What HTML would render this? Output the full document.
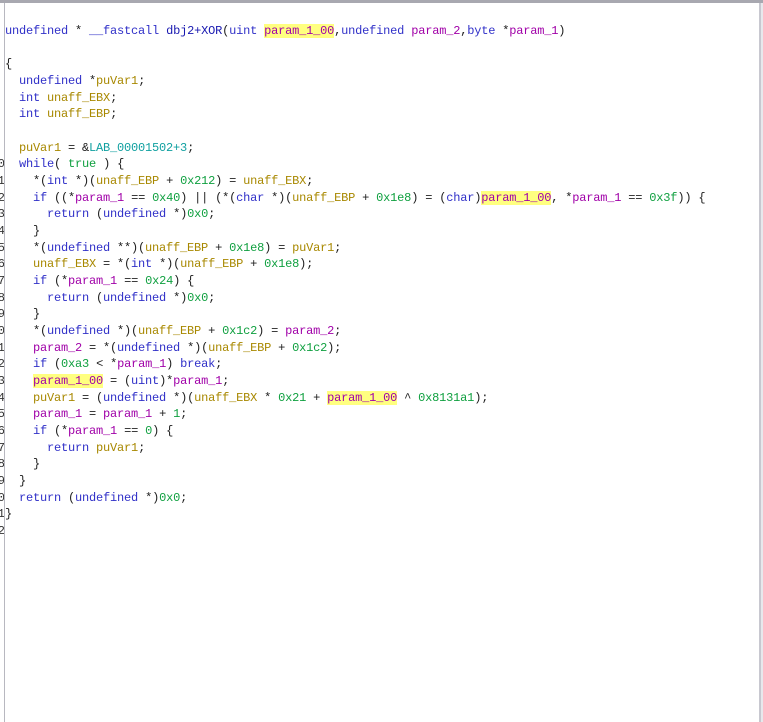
<!DOCTYPE html>
<html><head><style>
html,body{margin:0;padding:0;background:#fff;width:763px;height:722px;overflow:hidden;position:relative}
.top{position:absolute;left:0;top:0;width:763px;height:3px;background:#a8a8b0}
.lb{position:absolute;left:4px;top:3px;width:1px;height:719px;background:#b8b8c0}
.rb{position:absolute;left:759px;top:3px;width:2px;height:719px;background:#c8c8d0}
.rb2{position:absolute;left:761px;top:3px;width:2px;height:719px;background:#e8e8ec}
.code{position:absolute;left:5px;top:23px;font-family:"Liberation Mono",monospace;font-size:12px;letter-spacing:-0.2px;line-height:16.67px;white-space:pre;color:#202020}
.ln{position:absolute;right:758px;top:23px;font-family:"Liberation Mono",monospace;font-size:12px;line-height:16.67px;white-space:pre;color:#333;text-align:right}
.k{color:#3030c8}.p{color:#a000a8}.v{color:#a88800}.n{color:#10a040}.l{color:#10a0a0}.f{color:#1818b0}
.h{background:#ffff80}
</style></head><body>
<div class="top"></div>
<div class="ln">







10
11
12
13
14
15
16
17
18
19
20
21
22
23
24
25
26
27
28
29
30
31
32</div>
<div class="lb"></div>
<div class="code"><span class="k">undefined</span> * <span class="k">__fastcall</span> <span class="f">dbj2+XOR</span>(<span class="k">uint</span> <span class="p h">param_1_00</span>,<span class="k">undefined</span> <span class="p">param_2</span>,<span class="k">byte</span> *<span class="p">param_1</span>)

{
  <span class="k">undefined</span> *<span class="v">puVar1</span>;
  <span class="k">int</span> <span class="v">unaff_EBX</span>;
  <span class="k">int</span> <span class="v">unaff_EBP</span>;

  <span class="v">puVar1</span> = &amp;<span class="l">LAB_00001502+3</span>;
  <span class="k">while</span>( <span class="n">true</span> ) {
    *(<span class="k">int</span> *)(<span class="v">unaff_EBP</span> + <span class="n">0x212</span>) = <span class="v">unaff_EBX</span>;
    <span class="k">if</span> ((*<span class="p">param_1</span> == <span class="n">0x40</span>) || (*(<span class="k">char</span> *)(<span class="v">unaff_EBP</span> + <span class="n">0x1e8</span>) = (<span class="k">char</span>)<span class="p h">param_1_00</span>, *<span class="p">param_1</span> == <span class="n">0x3f</span>)) {
      <span class="k">return</span> (<span class="k">undefined</span> *)<span class="n">0x0</span>;
    }
    *(<span class="k">undefined</span> **)(<span class="v">unaff_EBP</span> + <span class="n">0x1e8</span>) = <span class="v">puVar1</span>;
    <span class="v">unaff_EBX</span> = *(<span class="k">int</span> *)(<span class="v">unaff_EBP</span> + <span class="n">0x1e8</span>);
    <span class="k">if</span> (*<span class="p">param_1</span> == <span class="n">0x24</span>) {
      <span class="k">return</span> (<span class="k">undefined</span> *)<span class="n">0x0</span>;
    }
    *(<span class="k">undefined</span> *)(<span class="v">unaff_EBP</span> + <span class="n">0x1c2</span>) = <span class="p">param_2</span>;
    <span class="p">param_2</span> = *(<span class="k">undefined</span> *)(<span class="v">unaff_EBP</span> + <span class="n">0x1c2</span>);
    <span class="k">if</span> (<span class="n">0xa3</span> &lt; *<span class="p">param_1</span>) <span class="k">break</span>;
    <span class="p h">param_1_00</span> = (<span class="k">uint</span>)*<span class="p">param_1</span>;
    <span class="v">puVar1</span> = (<span class="k">undefined</span> *)(<span class="v">unaff_EBX</span> * <span class="n">0x21</span> + <span class="p h">param_1_00</span> ^ <span class="n">0x8131a1</span>);
    <span class="p">param_1</span> = <span class="p">param_1</span> + <span class="n">1</span>;
    <span class="k">if</span> (*<span class="p">param_1</span> == <span class="n">0</span>) {
      <span class="k">return</span> <span class="v">puVar1</span>;
    }
  }
  <span class="k">return</span> (<span class="k">undefined</span> *)<span class="n">0x0</span>;
}
</div>
<div class="rb"></div><div class="rb2"></div>
</body></html>
